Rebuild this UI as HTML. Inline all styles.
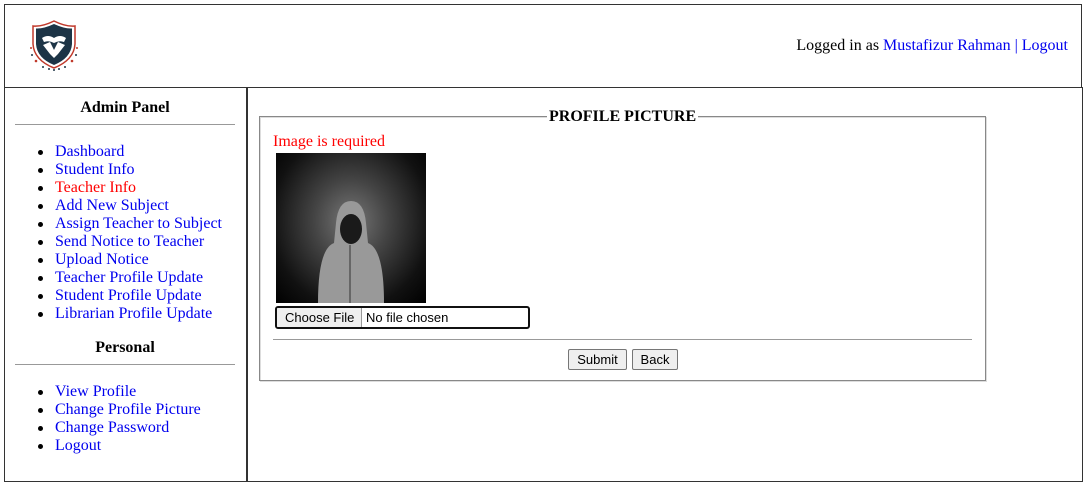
<!DOCTYPE html>
<html><head><meta charset="utf-8">
<style>
body{margin:0;width:1085px;height:485px;background:#fff;font-family:"Liberation Serif",serif;font-size:16px;color:#000;position:relative;overflow:hidden}
.a{position:absolute}
a{color:#00e;text-decoration:none}
ul{margin:0;padding:0 0 0 0;list-style:none}
li{position:absolute;left:55px;white-space:nowrap;line-height:18px}
li:before{content:"";position:absolute;left:-17px;top:7px;width:5px;height:5px;border-radius:50%;background:#000}
.btn{position:absolute;border:1px solid #767676;border-radius:2px;background:#efefef;font-family:"Liberation Sans",sans-serif;font-size:13px;text-align:center;line-height:19px;height:19px}
</style></head><body>
<div class="a" style="left:4px;top:4px;width:1076px;height:82px;border:1px solid #333;border-bottom:1px solid #333"></div>
<div class="a" style="left:4px;top:87px;width:242px;height:393px;border:1px solid #333"></div>
<div class="a" style="left:246px;top:87px;width:834px;height:393px;border:1px solid #333;border-left:2px solid #333"></div>

<svg class="a" style="left:28px;top:18px" width="52" height="54" viewBox="0 0 52 54">
<path d="M26 3 Q14 9 5 8 L5 26 Q6 42 26 50 Q46 42 47 26 L47 8 Q38 9 26 3Z" fill="#fff" stroke="#c0392b" stroke-width="1.5"/>
<path d="M26 6 Q15 11 8 10.5 L8 26 Q9 40 26 47 Q43 40 44 26 L44 10.5 Q37 11 26 6Z" fill="#1d3446"/>
<path d="M14 20 Q20 16 26 20 Q32 16 38 20 L36 24 Q31 22 26 25 Q21 22 16 24Z" fill="#fff"/>
<path d="M15 27 L22 24 L26 32 L30 24 L37 27 L30 36 L26 40 L22 36Z" fill="#fff"/>
<g fill="#c0392b"><circle cx="3" cy="30" r="1"/><circle cx="49" cy="30" r="1"/><circle cx="8" cy="43" r="1.3"/><circle cx="44" cy="43" r="1.3"/></g>
<g fill="#1d3446"><circle cx="4" cy="37" r="1"/><circle cx="48" cy="37" r="1"/><circle cx="15" cy="49" r="1"/><circle cx="37" cy="49" r="1"/><circle cx="21" cy="51" r="1"/><circle cx="31" cy="51" r="1"/><circle cx="26" cy="52" r="1"/></g>
</svg>
<div class="a" style="right:17px;top:37px">Logged in as <a href="#">Mustafizur Rahman</a> <span style="color:#00e">|</span> <a href="#">Logout</a></div>

<div class="a" style="left:5px;width:240px;top:99px;text-align:center;font-weight:bold">Admin Panel</div>
<div class="a" style="left:15px;top:124px;width:220px;border-top:1px solid #999"></div>
<ul>
<li style="top:143px"><a href="#">Dashboard</a></li>
<li style="top:161px"><a href="#">Student Info</a></li>
<li style="top:179px"><a href="#" style="color:#f00">Teacher Info</a></li>
<li style="top:197px"><a href="#">Add New Subject</a></li>
<li style="top:215px"><a href="#">Assign Teacher to Subject</a></li>
<li style="top:233px"><a href="#">Send Notice to Teacher</a></li>
<li style="top:251px"><a href="#">Upload Notice</a></li>
<li style="top:269px"><a href="#">Teacher Profile Update</a></li>
<li style="top:287px"><a href="#">Student Profile Update</a></li>
<li style="top:305px"><a href="#">Librarian Profile Update</a></li>
</ul>
<div class="a" style="left:5px;width:240px;top:339px;text-align:center;font-weight:bold">Personal</div>
<div class="a" style="left:15px;top:364px;width:220px;border-top:1px solid #999"></div>
<ul>
<li style="top:383px"><a href="#">View Profile</a></li>
<li style="top:401px"><a href="#">Change Profile Picture</a></li>
<li style="top:419px"><a href="#">Change Password</a></li>
<li style="top:437px"><a href="#">Logout</a></li>
</ul>

<div class="a" style="left:259px;top:116px;width:725px;height:263px;border:1px solid #888;box-shadow:inset 1px 1px 0 #ddd,1px 1px 0 #ddd"></div>
<div class="a" style="left:547px;top:108px;background:#fff;padding:0 2px;font-weight:bold">PROFILE PICTURE</div>
<div class="a" style="left:273px;top:133px;color:#f00">Image is required</div>
<div class="a" style="left:276px;top:153px;width:150px;height:150px;background:radial-gradient(ellipse at 50% 45%,#777 0%,#444 35%,#111 75%,#000 100%);overflow:hidden">
<svg width="150" height="150" viewBox="0 0 150 150"><path d="M60 70 Q62 48 75 48 Q88 48 90 70 L92 90 Q108 96 108 150 L42 150 Q42 96 58 90Z" fill="#999"/><ellipse cx="75" cy="76" rx="11" ry="15" fill="#1a1a1a"/><path d="M74 92 L74 150" stroke="#666" stroke-width="2"/></svg>
</div>
<div class="a" style="left:275px;top:306px;width:251px;height:19px;border:2px solid #111;border-radius:3px;font-family:'Liberation Sans',sans-serif;font-size:13px;line-height:19px;overflow:hidden">
<span style="display:inline-block;background:#efefef;border-right:1px solid #999;padding:0 7px 0 8px;height:19px">Choose File</span> No file chosen</div>
<div class="a" style="left:273px;top:339px;width:699px;border-top:1px solid #999"></div>
<div class="btn" style="left:568px;top:349px;width:57px">Submit</div>
<div class="btn" style="left:632px;top:349px;width:44px">Back</div>
</body></html>
